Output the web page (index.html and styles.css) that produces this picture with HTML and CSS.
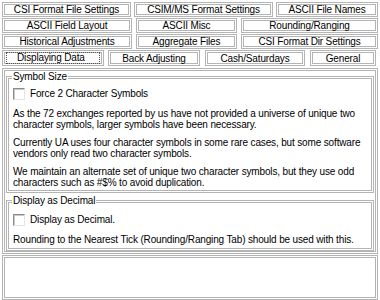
FILE: index.html
```html
<!DOCTYPE html>
<html lang="en">
<head>
    <meta charset="UTF-8">
    <title>Preferences - Displaying Data</title>
    <link rel="stylesheet" href="styles.css">
</head>
<body>
    <div class="dialog">
        <div class="tabs">
            <div class="tab-row">
                <div class="tab w-csi-file">CSI Format File Settings</div>
                <div class="tab w-csim">CSIM/MS Format Settings</div>
                <div class="tab w-file-names">ASCII File Names</div>
            </div>
            <div class="tab-row">
                <div class="tab w-left">ASCII Field Layout</div>
                <div class="tab w-mid">ASCII Misc</div>
                <div class="tab w-right">Rounding/Ranging</div>
            </div>
            <div class="tab-row">
                <div class="tab w-left">Historical Adjustments</div>
                <div class="tab w-mid">Aggregate Files</div>
                <div class="tab w-right">CSI Format Dir Settings</div>
            </div>
            <div class="tab-row front">
                <div class="tab selected w-display"><span class="focus">Displaying Data</span></div>
                <div class="tab w-back">Back Adjusting</div>
                <div class="tab w-cash">Cash/Saturdays</div>
                <div class="tab w-general">General</div>
            </div>
        </div>

        <div class="page">
            <fieldset class="group symbol-size">
                <legend>Symbol Size</legend>
                <label class="check"><span class="box"></span>Force 2 Character Symbols</label>
                <p>As the 72 exchanges reported by us have not provided a universe of unique two character symbols, larger symbols have been necessary.</p>
                <p>Currently UA uses four character symbols in some rare cases, but some software vendors only read two character symbols.</p>
                <p>We maintain an alternate set of unique two character symbols, but they use odd characters such as #$% to avoid duplication.</p>
            </fieldset>
            <fieldset class="group decimal">
                <legend>Display as Decimal</legend>
                <label class="check"><span class="box"></span>Display as Decimal.</label>
                <p>Rounding to the Nearest Tick (Rounding/Ranging Tab) should be used with this.</p>
            </fieldset>
        </div>

        <div class="lower"></div>
    </div>
</body>
</html>
```

FILE: styles.css
```css
body {
    margin: 0;
    background-color: #fff;
    color: #000;
    font-family: 'Liberation Sans', Arial, sans-serif;
    font-size: 10px;
    letter-spacing: -0.15px;
}

.dialog {
    width: 376px;
    margin: 2px 0 0 2px;
}

/* tab strip */
.tab-row {
    display: flex;
    gap: 4px;
    height: 15px;
    margin-bottom: 1px;
}

.tab {
    box-sizing: border-box;
    border: 3px double #b4b4b4;
    display: flex;
    align-items: center;
    justify-content: center;
    white-space: nowrap;
}

.w-csi-file { width: 129px; }
.w-csim { width: 139px; margin-left: -1px; }
.w-file-names { width: 102px; margin-left: -1px; }

.w-left { width: 130px; }
.w-mid { width: 101px; }
.w-right { width: 137px; }

.w-display { width: 102px; }
.w-back { width: 92px; }
.w-cash { width: 100px; margin-left: 1px; }
.w-general { width: 66px; margin-left: 1px; }

.tab-row.front {
    height: 16px;
    margin-bottom: 2px;
}

.tab.selected {
    padding: 0 2px;
}

.focus {
    display: block;
    width: 100%;
    text-align: left;
    padding-left: 10px;
    box-sizing: border-box;
    outline: 1px dotted #555;
    line-height: 10px;
}

/* page body */
.page {
    box-sizing: border-box;
    height: 186px;
    border: 3px double #b4b4b4;
    padding: 1px 1px 0;
    display: flex;
    flex-direction: column;
    gap: 3px;
}

.group {
    margin: 0;
    border: 3px double #b4b4b4;
    padding: 1px 3px 0 4px;
}

.group legend {
    padding: 0 1px;
    margin-left: -1px;
    line-height: 10px;
}

.symbol-size {
    height: 114px;
}

.decimal {
    height: 48px;
}

.check {
    display: flex;
    align-items: center;
    gap: 5px;
    height: 13px;
    margin: 4px 0 8px;
}

.decimal .check {
    margin-top: 6px;
}

.box {
    box-sizing: border-box;
    width: 12px;
    height: 12px;
    border-top: 1px solid #8c8c8c;
    border-left: 1px solid #8c8c8c;
    border-right: 1px solid #e4e4e4;
    border-bottom: 1px solid #e4e4e4;
    box-shadow: inset 1px 1px 0 #c8c8c8;
    background-color: #fff;
}

.group p {
    margin: 0 0 7px;
    line-height: 11px;
}

.lower {
    box-sizing: border-box;
    height: 45px;
    margin-top: 1px;
    border: 3px double #b4b4b4;
}
```
